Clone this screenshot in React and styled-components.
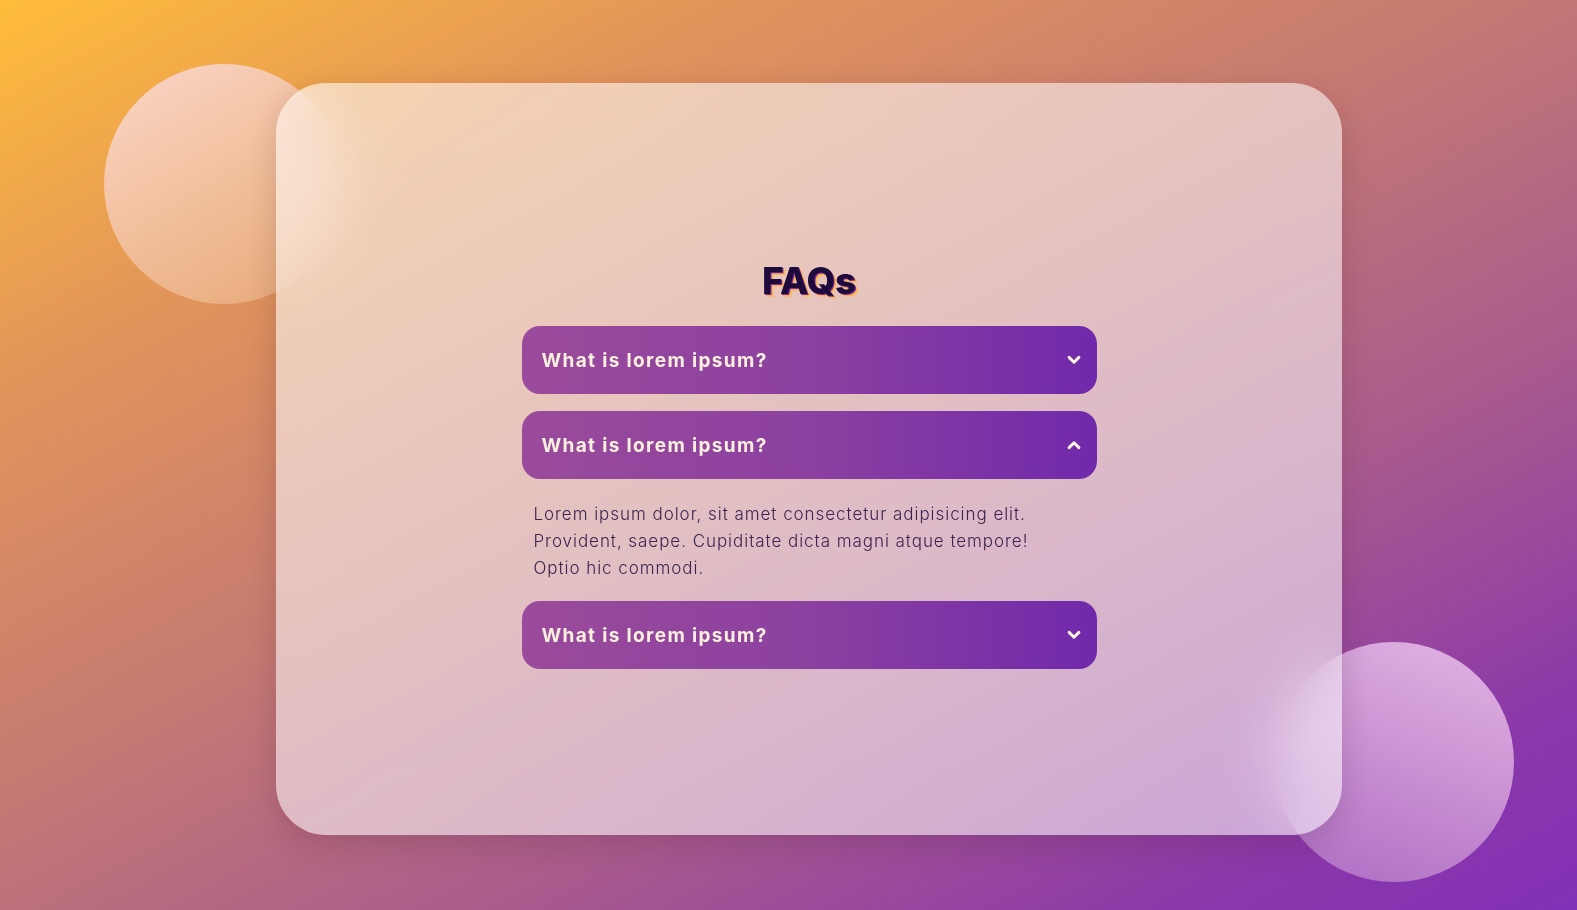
import { useState } from "react";
import styled, { createGlobalStyle } from "styled-components";

const GlobalStyle = createGlobalStyle`
  html, body {
    margin: 0;
    padding: 0;
  }
  body {
    font-family: Inter, "Liberation Sans", sans-serif;
    min-height: 100vh;
    overflow: hidden;
  }
  * {
    box-sizing: border-box;
  }
`;

const faqs = [
  {
    q: "What is lorem ipsum?",
    a: "Lorem ipsum dolor, sit amet consectetur adipisicing elit. Provident, saepe. Cupiditate dicta magni atque tempore! Optio hic commodi.",
  },
  {
    q: "What is lorem ipsum?",
    a: "Lorem ipsum dolor, sit amet consectetur adipisicing elit. Provident, saepe. Cupiditate dicta magni atque tempore! Optio hic commodi.",
  },
  {
    q: "What is lorem ipsum?",
    a: "Lorem ipsum dolor, sit amet consectetur adipisicing elit. Provident, saepe. Cupiditate dicta magni atque tempore! Optio hic commodi.",
  },
];

const Chevron = ({ up }) => (
  <ChevronIcon viewBox="0 0 24 24" $up={up}>
    <path d="M5.5 8.5l6.5 6.5 6.5-6.5" />
  </ChevronIcon>
);

const FaqItem = ({ item, open, onToggle }) => {
  return (
    <ItemStyle>
      <Question onClick={onToggle}>
        <span>{item.q}</span>
        <Chevron up={open} />
      </Question>
      {open && <Answer>{item.a}</Answer>}
    </ItemStyle>
  );
};

export default function App() {
  const [openIndex, setOpenIndex] = useState(1);

  return (
    <>
      <GlobalStyle />
      <Page>
        <Bubble $variant="top" />
        <Bubble $variant="bottom" />
        <Card>
          <Title>FAQs</Title>
          <List>
            {faqs.map((item, i) => (
              <FaqItem
                key={i}
                item={item}
                open={openIndex === i}
                onToggle={() => setOpenIndex(openIndex === i ? -1 : i)}
              />
            ))}
          </List>
        </Card>
      </Page>
    </>
  );
}

const Page = styled.div`
  position: relative;
  width: 100%;
  height: 100vh;
  display: flex;
  align-items: flex-start;
  padding: 83px 0 0 276px;
  background: linear-gradient(
    152deg,
    #ffbd3a 0%,
    #e2955a 22%,
    #c67a72 45%,
    #a85a8e 68%,
    #8a38aa 88%,
    #8230b6 100%
  );
`;

const Bubble = styled.div`
  position: absolute;
  width: 240px;
  height: 240px;
  border-radius: 50%;
  ${({ $variant }) =>
    $variant === "top"
      ? `
    left: 104px;
    top: 64px;
    background: linear-gradient(150deg, #f9d6ca 0%, #f4c4a4 40%, #e6a774 100%);
  `
      : `
    left: 1274px;
    top: 642px;
    background: linear-gradient(200deg, #e2b4e4 0%, #cc94d4 45%, #ad6cc4 100%);
  `}
`;

const Card = styled.div`
  position: relative;
  width: 1066px;
  height: 752px;
  border-radius: 50px;
  background: rgba(255, 255, 255, 0.55);
  backdrop-filter: blur(28px);
  -webkit-backdrop-filter: blur(28px);
  box-shadow: 0 10px 30px rgba(60, 20, 40, 0.18);
  display: flex;
  flex-direction: column;
  align-items: center;
  padding-top: 176px;
`;

const Title = styled.h1`
  margin: 0 0 23px;
  font-family: Inter, "Liberation Sans", sans-serif;
  font-size: 37px;
  font-weight: 800;
  line-height: 44px;
  letter-spacing: -0.3px;
  color: #1e0b3c;
  text-shadow: 1px 1px 0 #7a2db0, 2px 2px 0 #ffb43a, 3px 3px 0 rgba(255, 180, 58, 0.5);
`;

const List = styled.div`
  width: 575px;
  display: flex;
  flex-direction: column;
  gap: 17px;
`;

const ItemStyle = styled.div`
  display: flex;
  flex-direction: column;
`;

const Question = styled.div`
  height: 68px;
  border-radius: 18px;
  padding: 0 14px 0 20px;
  display: flex;
  align-items: center;
  justify-content: space-between;
  cursor: pointer;
  background: linear-gradient(90deg, #9a4b9b 0%, #8c40a0 50%, #7029ab 100%);
  color: #f8f0dc;
  font-family: Inter, "Liberation Sans", sans-serif;
  font-size: 19px;
  font-weight: 700;
  letter-spacing: 1.35px;
`;

const ChevronIcon = styled.svg`
  width: 18px;
  height: 18px;
  fill: none;
  stroke: #fbf3dc;
  stroke-width: 4;
  stroke-linecap: round;
  stroke-linejoin: round;
  transform: ${({ $up }) => ($up ? "rotate(180deg)" : "none")};
`;

const Answer = styled.p`
  margin: 0;
  max-width: 530px;
  padding: 22px 0 2px 12px;
  font-family: Inter, "Liberation Sans", sans-serif;
  font-size: 17px;
  font-weight: 300;
  line-height: 27px;
  letter-spacing: 0.95px;
  color: #3b2450;
`;
